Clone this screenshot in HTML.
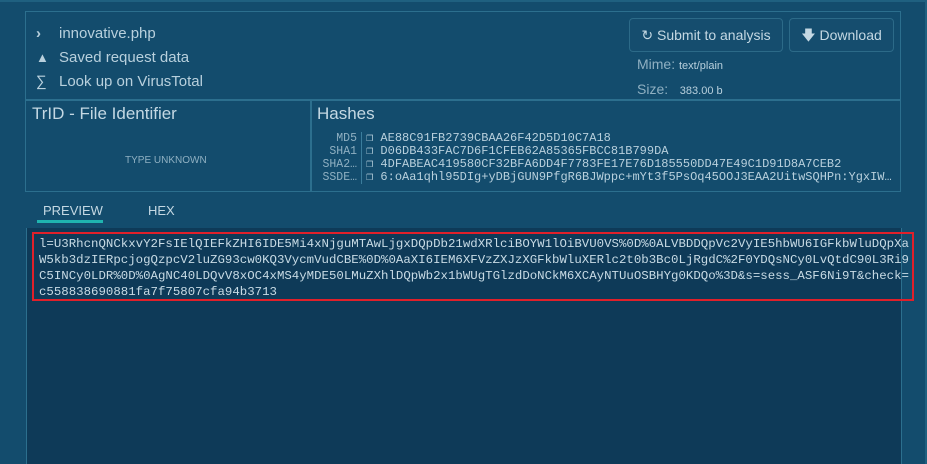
<!DOCTYPE html>
<html><head><style>
body{margin:0;width:927px;height:464px;background:#134c6d;font-family:"Liberation Sans",sans-serif;color:#b8d0dd;overflow:hidden;position:relative}
.abs{position:absolute}
.box{position:absolute;border:1px solid #2c6f8e}
.mono{font-family:"Liberation Mono",monospace}
.btn{position:absolute;border:1px solid #2c6a88;border-radius:4px;height:32px;line-height:32px;font-size:14px;color:#c4d8e3;text-align:center;background:#154d6e}
</style></head><body>
<div class="abs" style="left:0;top:0;width:927px;height:2px;background:#1f6080"></div>
<div class="abs" style="left:925px;top:0;width:2px;height:464px;background:#1f6080"></div>
<div class="box" style="left:25px;top:11px;width:874px;height:88px"></div>
<div class="box" style="left:25px;top:99px;width:285px;height:91px"></div>
<div class="box" style="left:310px;top:99px;width:589px;height:91px"></div>
<div class="abs" style="left:36px;top:22px;font-size:15px;line-height:24px">
<div><span style="display:inline-block;width:23px;font-weight:bold">&#x203A;</span>innovative.php</div>
<div><span style="display:inline-block;width:23px;font-size:13px">&#x25B2;</span>Saved request data</div>
<div><span style="display:inline-block;width:23px">&#x2211;</span>Look up on VirusTotal</div>
</div>
<div class="btn" style="left:629px;top:18px;width:152px">&#x21BB; Submit to analysis</div>
<div class="btn" style="left:789px;top:18px;width:103px">&#x1F847; Download</div>
<div class="abs" style="left:637px;top:53px;font-size:14px;line-height:23px;color:#8fb0c2">
<div>Mime: <span style="font-size:11px;color:#b8d0dd">text/plain</span></div>
<div>Size: &nbsp; <span style="font-size:11px;color:#b8d0dd">383.00 b</span></div>
</div>
<div class="abs" style="left:32px;top:104px;font-size:17px;color:#c4d8e3">TrID - File Identifier</div>
<div class="abs" style="left:125px;top:155px;font-size:10px;color:#8fb0c2">TYPE UNKNOWN</div>
<div class="abs" style="left:317px;top:104px;font-size:17px;color:#c4d8e3">Hashes</div>
<div class="abs mono" style="left:314px;top:132px;font-size:11.5px;line-height:13px;color:#8fb0c2;text-align:right;width:43px">MD5<br>SHA1<br>SHA2…<br>SSDE…</div>
<div class="abs" style="left:361px;top:132px;width:1px;height:52px;background:#3b7d9c"></div>
<div class="abs mono" style="left:366px;top:132px;font-size:12px;line-height:13px;color:#b8d0dd;white-space:nowrap">
<div>&#x2750; AE88C91FB2739CBAA26F42D5D10C7A18</div>
<div>&#x2750; D06DB433FAC7D6F1CFEB62A85365FBCC81B799DA</div>
<div>&#x2750; 4DFABEAC419580CF32BFA6DD4F7783FE17E76D185550DD47E49C1D91D8A7CEB2</div>
<div>&#x2750; 6:oAa1qhl95DIg+yDBjGUN9PfgR6BJWppc+mYt3f5PsOq45OOJ3EAA2UitwSQHPn:YgxIW…</div>
</div>
<div class="abs" style="left:43px;top:203px;font-size:13px;color:#c4d8e3">PREVIEW</div>
<div class="abs" style="left:37px;top:220px;width:66px;height:3px;background:#1fb4b0"></div>
<div class="abs" style="left:148px;top:203px;font-size:13px;color:#c4d8e3">HEX</div>
<div class="abs" style="left:26px;top:228px;width:874px;height:236px;background:#0e3a58;border-left:1px solid #2c6f8e;border-right:1px solid #2c6f8e"></div>
<div class="abs" style="left:32px;top:232px;width:878px;height:65px;border:2px solid #e0202a"></div>
<div class="abs mono" style="left:39px;top:236px;font-size:12.4px;line-height:16px;color:#c8dbe5;white-space:pre">l=U3RhcnQNCkxvY2FsIElQIEFkZHI6IDE5Mi4xNjguMTAwLjgxDQpDb21wdXRlciBOYW1lOiBVU0VS%0D%0ALVBDDQpVc2VyIE5hbWU6IGFkbWluDQpXa
W5kb3dzIERpcjogQzpcV2luZG93cw0KQ3VycmVudCBE%0D%0AaXI6IEM6XFVzZXJzXGFkbWluXERlc2t0b3Bc0LjRgdC%2F0YDQsNCy0LvQtdC90L3Ri9
C5INCy0LDR%0D%0AgNC40LDQvV8xOC4xMS4yMDE50LMuZXhlDQpWb2x1bWUgTGlzdDoNCkM6XCAyNTUuOSBHYg0KDQo%3D&s=sess_ASF6Ni9T&check=
c558838690881fa7f75807cfa94b3713</div>
</body></html>
